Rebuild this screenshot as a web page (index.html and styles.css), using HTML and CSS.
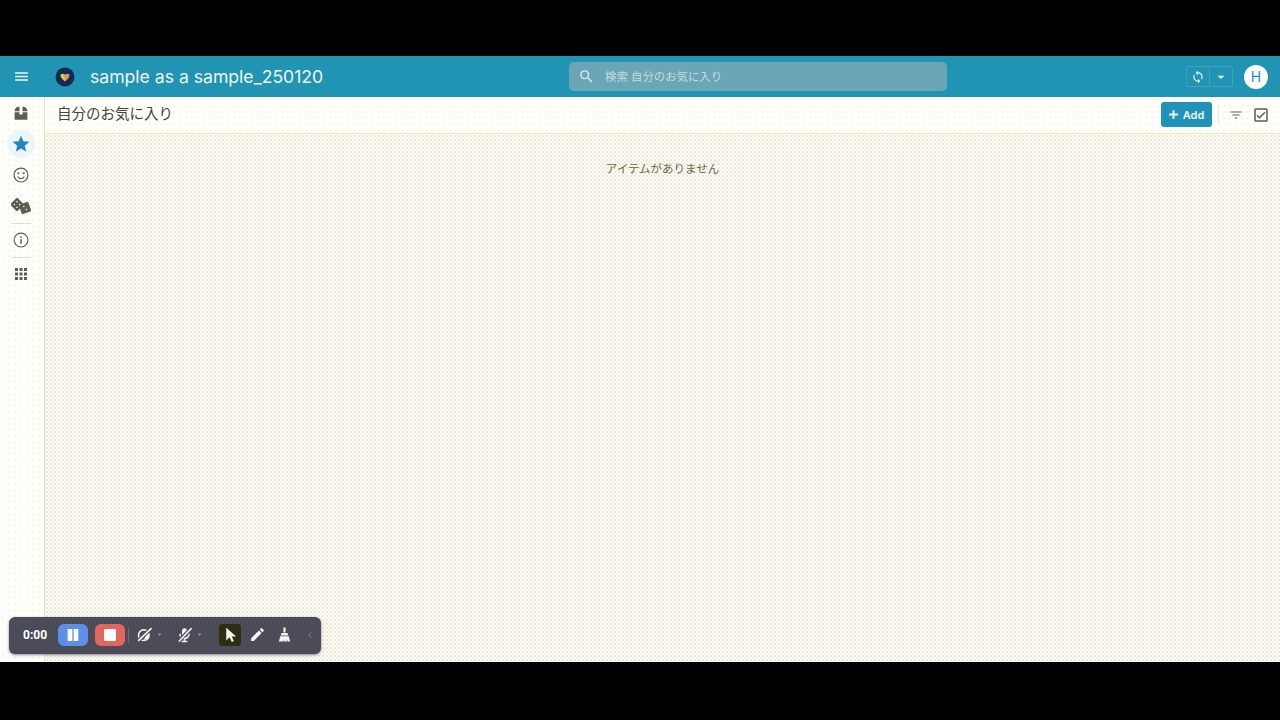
FILE: index.html
```html
<!DOCTYPE html>
<html lang="ja">
<head>
<meta charset="utf-8">
<title>sample as a sample_250120</title>
<link rel="stylesheet" href="styles.css">
</head>
<body>
<div class="letterbox-top"></div>
<div class="app">
  <header class="topbar">
    <div class="topbar-left">
      <svg class="icon menu-icon" viewBox="0 0 24 24"><path d="M3 18h18v-2H3v2zm0-5h18v-2H3v2zm0-7v2h18V6H3z"/></svg>
      <svg class="logo" viewBox="0 0 20 20"><circle cx="10" cy="10" r="9.500" fill="#0f2a56"/><path d="M5.600 7.600c1.400-1.200 3-.9 4.400.2v6.600C7.800 13 5 10.200 5.600 7.600z" fill="#f4c53d"/><path d="M14.400 7.600c-1.400-1.200-3-.9-4.400.2v6.600c2.200-1.400 5-4.200 4.400-6.600z" fill="#ee8a4a"/><path d="M7.800 7.800h4.400L10 11.300z" fill="#7fc28a"/></svg>
      <span class="app-title">sample as a sample_250120</span>
    </div>
    <div class="search">
      <svg class="icon search-icon" viewBox="0 0 24 24"><path d="M15.500 14h-.79l-.28-.27A6.470 6.470 0 0 0 16 9.500 6.500 6.500 0 1 0 9.500 16c1.610 0 3.090-.59 4.230-1.570l.27.28v.79l5 4.990L20.490 19l-4.990-5zm-6 0C7.010 14 5 11.990 5 9.500S7.010 5 9.500 5 14 7.010 14 9.500 11.990 14 9.500 14z"/></svg>
      <span class="search-text">検索 自分のお気に入り</span>
    </div>
    <div class="topbar-right">
      <div class="sync-group">
        <span class="sync-cell"><svg class="icon sync-icon" viewBox="0 0 24 24"><path d="M12 4V1L8 5l4 4V6c3.310 0 6 2.690 6 6 0 1.010-.25 1.970-.7 2.800l1.460 1.460A7.930 7.930 0 0 0 20 12c0-4.420-3.580-8-8-8zm0 14c-3.310 0-6-2.690-6-6 0-1.010.25-1.970.7-2.800L5.240 7.740A7.930 7.930 0 0 0 4 12c0 4.420 3.580 8 8 8v3l4-4-4-4v3z"/></svg></span>
        <span class="sync-cell sync-caret"><svg class="icon caret-icon" viewBox="0 0 24 24"><path d="M7 10l5 5 5-5z"/></svg></span>
      </div>
      <div class="avatar">H</div>
    </div>
  </header>
  <div class="main">
    <nav class="sidebar">
      <svg class="icon side-icon" viewBox="0 0 24 24"><path d="M3.500 21v-10H10v3h4v-3h6.500v10zM3.500 9.500C3.500 6 6 3.500 8.500 3.500H10v6zM20.500 9.500C20.500 6 18 3.500 15.500 3.500H14v6z"/></svg>
      <span class="star-wrap"><svg class="icon star-icon" viewBox="0 0 24 24"><path d="M12 17.270 18.180 21l-1.640-7.030L22 9.240l-7.190-.61L12 2 9.190 8.630 2 9.240l5.460 4.730L5.820 21z"/></svg></span>
      <svg class="icon side-icon" viewBox="0 0 24 24"><path d="M11.990 2C6.470 2 2 6.480 2 12s4.470 10 9.990 10C17.520 22 22 17.520 22 12S17.520 2 11.990 2zM12 20.500a8.500 8.500 0 1 1 0-17 8.500 8.500 0 0 1 0 17zM8.500 11a1.400 1.400 0 1 0 0-2.800 1.400 1.400 0 0 0 0 2.800zm7 0a1.400 1.400 0 1 0 0-2.800 1.400 1.400 0 0 0 0 2.800zM12 17.500c2.300 0 4.300-1.400 5.100-3.500h-1.600c-.7 1.200-2 2-3.500 2s-2.800-.8-3.500-2H6.900c.8 2.100 2.800 3.500 5.100 3.500z"/></svg>
      <svg class="icon side-icon dice" viewBox="0 0 20 18">
        <rect class="die" x="1" y="2.500" width="10" height="10" rx="1.200" transform="rotate(45 6 7.500)"/>
        <rect class="die" x="9" y="6" width="10" height="10" rx="1.200" transform="rotate(-20 14 11)"/>
        <circle class="pip" cx="6" cy="4.800" r=".8"/><circle class="pip" cx="3.300" cy="7.500" r=".8"/><circle class="pip" cx="8.700" cy="7.500" r=".8"/><circle class="pip" cx="6" cy="10.200" r=".8"/>
        <circle class="pip" cx="12.800" cy="9.500" r=".8"/><circle class="pip" cx="15.400" cy="12.500" r=".8"/>
      </svg>
      <hr class="side-rule">
      <svg class="icon side-icon" viewBox="0 0 24 24"><path d="M11 7h2v2h-2V7zm0 4h2v6h-2v-6zm1-9a10 10 0 1 0 0 20 10 10 0 0 0 0-20zm0 18.500a8.500 8.500 0 1 1 0-17 8.500 8.500 0 0 1 0 17z"/></svg>
      <hr class="side-rule">
      <svg class="icon side-icon" viewBox="0 0 24 24"><path d="M4 8h4V4H4v4zm6 12h4v-4h-4v4zm-6 0h4v-4H4v4zm0-6h4v-4H4v4zm6 0h4v-4h-4v4zm6-10v4h4V4h-4zm-6 4h4V4h-4v4zm6 6h4v-4h-4v4zm0 6h4v-4h-4v4z"/></svg>
    </nav>
    <main class="content">
      <div class="page-head">
        <h1 class="page-title">自分のお気に入り</h1>
        <div class="page-actions">
          <button class="add-btn"><svg class="icon add-icon" viewBox="0 0 24 24"><path d="M19 13.500h-5.500V19h-3v-5.500H5v-3h5.500V5h3v5.500H19z"/></svg>Add</button>
          <span class="action-rule"></span>
          <svg class="icon action-icon" viewBox="-3 -3 30 30"><path d="M10 18h4v-2h-4v2zM3 6v2h18V6H3zm3 7h12v-2H6v2z"/></svg>
          <svg class="icon action-icon" viewBox="0 0 24 24"><path d="M19 3H5a2 2 0 0 0-2 2v14a2 2 0 0 0 2 2h14a2 2 0 0 0 2-2V5a2 2 0 0 0-2-2zm0 16H5V5h14v14zM17.990 9l-1.410-1.420-6.590 6.590-2.580-2.570-1.420 1.410 4 3.990z"/></svg>
        </div>
      </div>
      <div class="page-body">
        <p class="empty">アイテムがありません</p>
      </div>
    </main>
  </div>
  <div class="recorder">
    <span class="rec-time">0:00</span>
    <span class="rec-btn rec-pause"><svg class="icon rec-glyph" viewBox="0 0 24 24"><path d="M4 3h7v18H4zM13 3h7v18h-7z"/></svg></span>
    <span class="rec-btn rec-stop"><svg class="icon rec-glyph" viewBox="0 0 24 24"><rect x="3" y="3" width="18" height="18" rx="2"/></svg></span>
    <span class="rec-rule"></span>
    <span class="rec-tool"><svg class="icon rec-icon" viewBox="0 0 24 24">
      <circle class="rec-line" cx="11" cy="13" r="7.500"/>
      <path d="M16.500 8 11 19.500a7.500 7.500 0 0 0 7.500-6.500c0-2-.7-3.700-2-5z"/>
      <path class="rec-gap" d="M2 22 22 3"/>
      <path class="rec-line" d="M3 21 22 3"/>
    </svg></span>
    <svg class="icon rec-caret" viewBox="0 0 24 24"><path d="M7 10l5 5 5-5z"/></svg>
    <span class="rec-tool rec-mic"><svg class="icon rec-icon" viewBox="0 0 24 24">
      <rect x="8.500" y="3" width="7" height="12" rx="3.500"/>
      <path class="rec-line" d="M5.500 11c0 3.800 2.900 6.500 6.500 6.500s6.500-2.700 6.500-6.500M12 17.500V22M8 22h8"/>
      <path class="rec-gap" d="M3 22 22 3"/>
      <path class="rec-line" d="M4 22 22 3"/>
    </svg></span>
    <svg class="icon rec-caret" viewBox="0 0 24 24"><path d="M7 10l5 5 5-5z"/></svg>
    <span class="rec-tool rec-cursor"><svg class="icon rec-icon" viewBox="0 0 24 24"><path d="M6 2.500v18l4.800-4.600 3 6.600 3-1.400-3-6.400H20z"/></svg></span>
    <span class="rec-tool"><svg class="icon rec-icon" viewBox="0 0 24 24"><path d="M3 17.250V21h3.750L17.810 9.940l-3.750-3.750L3 17.250zM20.710 7.040a1 1 0 0 0 0-1.410l-2.340-2.340a1 1 0 0 0-1.410 0l-1.830 1.830 3.750 3.750 1.830-1.830z"/></svg></span>
    <span class="rec-tool"><svg class="icon rec-icon" viewBox="0 0 24 24"><path d="M10.500 2h3v7h-3zM8 10h8l1.500 3.500h-11zM6 14.500h12L20 22h-3.500l-.8-3-.2 3h-2.300l-.2-3-.2 3H10.500l-.3-3-.9 3H4z"/></svg></span>
    <svg class="icon rec-chevron" viewBox="0 0 24 24"><path d="M15.400 7.400 14 6l-6 6 6 6 1.400-1.400-4.600-4.600z"/></svg>
  </div>
</div>
<div class="letterbox-bottom"></div>
</body>
</html>
```

FILE: styles.css
```css
* { box-sizing: border-box; }
html, body { height: 100%; margin: 0; }
body {
  display: flex;
  flex-direction: column;
  background: #000;
  font-family: "Inter", "Noto Sans CJK JP", "Liberation Sans", sans-serif;
  overflow: hidden;
}
.letterbox-top { height: 56px; flex: none; }
.letterbox-bottom { height: 58px; flex: none; }
.app {
  position: relative;
  flex: 1;
  min-height: 0;
  display: flex;
  flex-direction: column;
  background: #fff;
}
.icon { display: block; fill: currentColor; flex: none; }

.topbar {
  height: 41px;
  flex: none;
  display: grid;
  grid-template-columns: 569px 378px 1fr;
  align-items: center;
  color: #fff;
  background-color: #2194b4;
}
.topbar-left { display: flex; align-items: center; padding-left: 13px; }
.menu-icon { width: 17px; height: 17px; color: #eef7fb; }
.logo { width: 20px; height: 20px; margin-left: 25px; }
.app-title { margin: 0 0 1px 15px; font-size: 17.600px; color: #eef7f8; white-space: nowrap; }
.search {
  height: 29px;
  display: flex;
  align-items: center;
  padding-left: 9px;
  border-radius: 5px;
  background: #6aa6b6;
}
.search-icon { width: 17px; height: 17px; color: #dbeaf0; }
.search-text { margin: 0 0 1px 10px; font-size: 11.400px; color: #c6dcdf; }
.topbar-right { display: flex; align-items: center; justify-content: flex-end; padding-right: 12px; }
.sync-group {
  display: flex;
  height: 21px;
  border: 1px solid rgba(255,255,255,.14);
  border-radius: 2px;
}
.sync-cell { width: 22px; display: flex; align-items: center; justify-content: center; }
.sync-caret { width: 23px; border-left: 1px solid rgba(255,255,255,.14); }
.sync-icon { width: 14px; height: 14px; color: #e3f1f5; }
.caret-icon { width: 16px; height: 16px; color: #f2f8fa; }
.avatar {
  width: 24px;
  height: 24px;
  margin-left: 11px;
  border-radius: 50%;
  background: #fff;
  color: #2596b4;
  font-size: 14px;
  line-height: 24px;
  text-align: center;
}

.main { flex: 1; min-height: 0; display: flex; }
.sidebar {
  width: 45px;
  flex: none;
  display: flex;
  flex-direction: column;
  align-items: center;
  padding-top: 7px;
  padding-right: 2px;
  border-right: 1px solid #e6e6b8;
  color: #5f5d50;
  background-color: #fff;
  background-image: radial-gradient(#fdf9c8 .7px, transparent .8px);
  background-size: 6px 6px;
}
.side-icon { width: 18px; height: 18px; margin-bottom: 13px; }
.side-icon + .side-rule { margin-top: -5px; }
.dice { width: 20px; }
.die { fill: #5f5d50; }
.pip { fill: #fff; }
.star-wrap {
  width: 28px;
  height: 28px;
  margin: -5px 0 8px;
  border-radius: 50%;
  background: #edf5f8;
  display: flex;
  align-items: center;
  justify-content: center;
}
.star-icon { width: 20px; height: 20px; color: #1f87c4; }
.side-rule {
  width: 20px;
  height: 1px;
  margin: 0 0 7px;
  border: 0;
  background: #e0e0c8;
}

.content { flex: 1; min-width: 0; display: flex; flex-direction: column; }
.page-head {
  height: 37px;
  flex: none;
  display: flex;
  align-items: center;
  justify-content: space-between;
  padding: 0 10px 4px 12px;
  border-bottom: 1px solid #f2eda0;
  background-color: #fff;
  background-image: radial-gradient(#fdf9c8 .7px, transparent .8px);
  background-size: 6px 6px;
}
.page-title { margin: 0 0 2px; font-size: 14.500px; font-weight: 400; color: #45433a; }
.page-actions { display: flex; align-items: center; }
.add-btn {
  height: 25px;
  width: 51px;
  margin-top: 3px;
  display: flex;
  align-items: center;
  justify-content: center;
  gap: 2px;
  padding: 0 3px 0 0;
  border: 0;
  border-radius: 3px;
  background: #2193b8;
  color: #eef7f8;
  font: 600 11px "Inter", "Liberation Sans", sans-serif;
}
.add-icon { width: 15px; height: 15px; }
.action-rule { width: 1px; height: 18px; margin: 3px 7px 0 6px; background: #ececd0; }
.action-icon { width: 18px; height: 18px; margin: 3px 0 0 1px; color: #5f5d50; }
.action-icon + .action-icon { margin-left: 7px; }
.page-body {
  flex: 1;
  background-color: #fff;
  background-image:
    radial-gradient(#e6e4f2 .9px, transparent 1px),
    radial-gradient(#f8f4bc .9px, transparent 1px);
  background-size: 4px 4px, 4px 4px;
  background-position: 0 0, 2px 2px;
}
.empty { margin: 26px 0 0; text-align: center; font-size: 11.500px; color: #6a684a; }

.recorder {
  position: absolute;
  left: 9px;
  bottom: 8px;
  width: 312px;
  height: 37px;
  display: flex;
  align-items: center;
  padding: 0 0 2px 14px;
  border-radius: 6px;
  background: #4b4c58;
  box-shadow: 0 1px 3px rgba(60,60,90,.6);
  color: #fff;
}
.rec-time { width: 35px; font: 700 12px "Roboto", "Liberation Sans", sans-serif; }
.rec-btn {
  width: 30px;
  height: 22px;
  display: flex;
  align-items: center;
  justify-content: center;
  border-radius: 6px;
}
.rec-pause { background: #5d8fe6; }
.rec-stop { margin-left: 7px; background: #e2665f; }
.rec-glyph { width: 16px; height: 16px; color: #fff; }
.rec-rule { width: 1px; height: 16px; margin: 0 4px 0 3px; background: #6a6b75; }
.rec-tool { width: 22px; height: 22px; display: flex; align-items: center; justify-content: center; }
.rec-icon { width: 17px; height: 17px; color: #f4f4f4; }
.rec-line { fill: none; stroke: #f4f4f4; stroke-width: 2.200; }
.rec-gap { fill: none; stroke: #4b4c58; stroke-width: 5; }
.rec-caret { width: 9px; height: 9px; color: #a8a8ae; }
.rec-mic { margin-left: 9px; }
.rec-cursor { margin-left: 15px; border-radius: 3px; background: #2e2e10; }
.rec-cursor + .rec-tool { margin-left: 5px; }
.rec-cursor + .rec-tool + .rec-tool { margin-left: 5px; }
.rec-chevron { width: 12px; height: 12px; margin-left: 9px; color: #77787f; }
```
